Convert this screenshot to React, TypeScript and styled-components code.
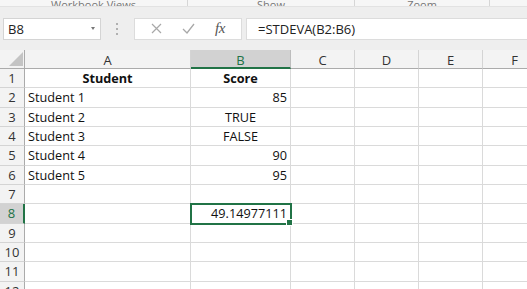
import React from "react";
import styled, { createGlobalStyle } from "styled-components";

const GlobalStyle = createGlobalStyle`
    html, body {
        margin: 0;
        padding: 0;
        background: #ffffff;
        overflow: hidden;
    }
    body {
        font-family: "Open Sans", "Liberation Sans", sans-serif;
    }
`;

const GREEN = "#217346";
const GRID = "#dadada";

const Page = styled.div`
    width: 527px;
    height: 289px;
    overflow: hidden;
    background: #eeeeee;
`;

const Ribbon = styled.div`
    display: flex;
    height: 6px;
    overflow: hidden;
    background: #f6f6f6;
    border-bottom: 1px solid #e2e2e2;
`;

const RibbonGroup = styled.div<{ $w: number }>`
    flex: 0 0 ${(p) => p.$w}px;
    display: flex;
    align-items: flex-end;
    justify-content: center;
    border-right: 1px solid #d6d6d6;
    font-size: 11px;
    line-height: 14px;
    color: #777;
    span {
        margin-bottom: -6px;
    }
`;

const FormulaBar = styled.div`
    display: flex;
    align-items: center;
    height: 23px;
    margin: 10px 0 10px 3px;
`;

const NameBox = styled.div`
    display: flex;
    align-items: center;
    justify-content: space-between;
    width: 98px;
    height: 22px;
    background: #fff;
    border: 1px solid #d4d4d4;
    box-sizing: border-box;
    padding: 0 5px 0 4px;
    font-size: 13px;
    color: #222;
`;

const Caret = styled.span`
    width: 0;
    height: 0;
    border-left: 2.5px solid transparent;
    border-right: 2.5px solid transparent;
    border-top: 3px solid #777;
`;

const Grip = styled.div`
    display: flex;
    flex-direction: column;
    gap: 3px;
    margin: 0 16px 0 15px;
    i {
        width: 2px;
        height: 2px;
        background: #b0b0b0;
    }
`;

const ActionBox = styled.div`
    display: flex;
    align-items: center;
    justify-content: space-around;
    width: 108px;
    height: 22px;
    background: #fff;
    border: 1px solid #dcdcdc;
    box-sizing: border-box;
    padding: 0 6px;
`;

const Fx = styled.span`
    font-family: "Liberation Serif", "DejaVu Serif", serif;
    font-style: italic;
    font-size: 15px;
    color: #555;
    letter-spacing: -0.5px;
`;

const FormulaInput = styled.div`
    flex: 1;
    display: flex;
    align-items: center;
    height: 22px;
    margin-left: 4px;
    background: #fff;
    border-top: 1px solid #dcdcdc;
    border-bottom: 1px solid #dcdcdc;
    border-left: 1px solid #dcdcdc;
    box-sizing: border-box;
    padding-left: 11px;
    font-size: 13px;
    color: #222;
`;

const Sheet = styled.div`
    display: grid;
    grid-template-columns: 25px 166px 100px 64px 64px 64px 64px;
    grid-auto-rows: 19.33px;
    grid-template-rows: 19px;
    font-size: 12.7px;
    color: #111;
`;

const Corner = styled.div`
    position: relative;
    background: #f3f3f3;
    border-right: 1px solid #ababab;
    border-bottom: 1px solid #ababab;
    display: flex;
    align-items: flex-end;
    justify-content: flex-end;
    padding: 0 1px 2px 0;
`;

const ColHead = styled.div<{ $active?: boolean }>`
    display: flex;
    align-items: center;
    justify-content: center;
    background: ${(p) => (p.$active ? "#d2d2d2" : "#f3f3f3")};
    color: ${(p) => (p.$active ? GREEN : "#333")};
    border-right: 1px solid ${(p) => (p.$active ? "#bdbdbd" : "#d4d4d4")};
    border-bottom: ${(p) => (p.$active ? `2px solid ${GREEN}` : "1px solid #ababab")};
    box-sizing: border-box;
    font-size: 13px;
    padding-top: 2px;
`;

const RowHead = styled.div<{ $active?: boolean }>`
    display: flex;
    align-items: center;
    justify-content: center;
    background: ${(p) => (p.$active ? "#d2d2d2" : "#f3f3f3")};
    color: ${(p) => (p.$active ? GREEN : "#333")};
    border-right: ${(p) => (p.$active ? `2px solid ${GREEN}` : "1px solid #ababab")};
    border-bottom: 1px solid #d4d4d4;
    box-sizing: border-box;
    font-size: 13px;
`;

const Cell = styled.div<{ $align?: "left" | "center" | "right"; $bold?: boolean; $selected?: boolean }>`
    position: relative;
    display: flex;
    align-items: center;
    justify-content: ${(p) =>
        p.$align === "right" ? "flex-end" : p.$align === "center" ? "center" : "flex-start"};
    padding: 0 3px;
    background: #fff;
    border-right: 1px solid ${GRID};
    border-bottom: 1px solid ${GRID};
    box-sizing: border-box;
    font-weight: ${(p) => (p.$bold ? 700 : 400)};
    white-space: nowrap;
    ${(p) =>
        p.$selected &&
        `
        outline: 2px solid ${GREEN};
        outline-offset: -1px;
        z-index: 1;
        &::after {
            content: "";
            position: absolute;
            right: -3px;
            bottom: -3px;
            width: 5px;
            height: 5px;
            background: ${GREEN};
            border: 1px solid #fff;
        }
    `}
`;

type Align = "left" | "center" | "right";
type CellData = { text?: string; align?: Align; bold?: boolean };

const columns = ["A", "B", "C", "D", "E", "F"];

const rows: CellData[][] = [
    [{ text: "Student", align: "center", bold: true }, { text: "Score", align: "center", bold: true }],
    [{ text: "Student 1" }, { text: "85", align: "right" }],
    [{ text: "Student 2" }, { text: "TRUE", align: "center" }],
    [{ text: "Student 3" }, { text: "FALSE", align: "center" }],
    [{ text: "Student 4" }, { text: "90", align: "right" }],
    [{ text: "Student 5" }, { text: "95", align: "right" }],
    [],
    [{}, { text: "49.14977111", align: "right" }],
    [],
    [],
    [],
    [],
];

export default function App() {
    return (
        <Page>
            <GlobalStyle />
            <Ribbon>
                <RibbonGroup $w={187}>
                    <span>Workbook Views</span>
                </RibbonGroup>
                <RibbonGroup $w={166}>
                    <span>Show</span>
                </RibbonGroup>
                <RibbonGroup $w={134}>
                    <span>Zoom</span>
                </RibbonGroup>
            </Ribbon>
            <FormulaBar>
                <NameBox>
                    <span>B8</span>
                    <Caret />
                </NameBox>
                <Grip>
                    <i />
                    <i />
                    <i />
                </Grip>
                <ActionBox>
                    <svg width="11" height="11" viewBox="0 0 11 11">
                        <path d="M1 1L10 10M10 1L1 10" stroke="#a8a8a8" strokeWidth="1.2" fill="none" />
                    </svg>
                    <svg width="13" height="11" viewBox="0 0 13 11">
                        <path d="M1 6L5 10L12 1" stroke="#a8a8a8" strokeWidth="1.3" fill="none" />
                    </svg>
                    <Fx>fx</Fx>
                </ActionBox>
                <FormulaInput>=STDEVA(B2:B6)</FormulaInput>
            </FormulaBar>
            <Sheet>
                <Corner>
                    <svg width="14" height="14" viewBox="0 0 14 14">
                        <path d="M14 0L14 14L0 14Z" fill="#c4c4c4" />
                    </svg>
                </Corner>
                {columns.map((c) => (
                    <ColHead key={c} $active={c === "B"}>
                        {c}
                    </ColHead>
                ))}
                {rows.map((row, r) => (
                    <React.Fragment key={r}>
                        <RowHead $active={r === 7}>{r + 1}</RowHead>
                        {columns.map((c, ci) => {
                            const cell = row[ci] || {};
                            return (
                                <Cell
                                    key={c}
                                    $align={cell.align}
                                    $bold={cell.bold}
                                    $selected={r === 7 && c === "B"}
                                >
                                    {cell.text}
                                </Cell>
                            );
                        })}
                    </React.Fragment>
                ))}
            </Sheet>
        </Page>
    );
}
